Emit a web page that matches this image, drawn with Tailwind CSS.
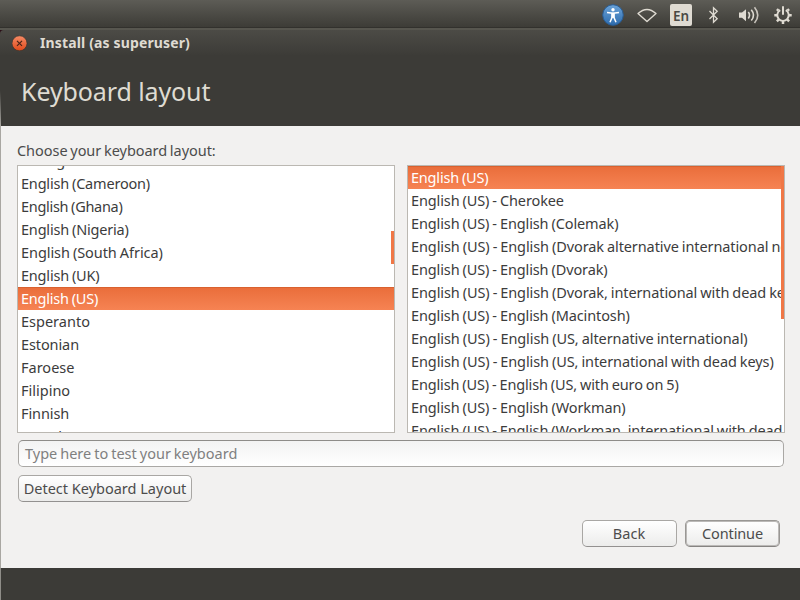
<!DOCTYPE html>
<html lang="en"><head><meta charset="utf-8"><title>Install</title>
<script src="https://cdn.jsdelivr.net/npm/@tailwindcss/browser@4"></script></head>
<body class="w-[800px] h-[600px] overflow-hidden bg-[#3c3b37] font-['Noto_Sans',sans-serif] text-[14.5px] text-[#3c3c3c] flex flex-col whitespace-nowrap">
<header class="h-[28px] shrink-0 bg-linear-to-b from-[#5d5c56] to-[#3d3c37] border-b border-[#32312d] flex items-center justify-end pr-[8px] pt-[3px] text-[#dfdbd2]">
  <svg class="w-[22px] h-[22px] mr-[13px]" viewBox="0 0 22 22"><defs><linearGradient id="a" x2="0" y2="1"><stop stop-color="#6ba3d8"/><stop offset="1" stop-color="#2d6cae"/></linearGradient></defs><circle cx="11" cy="11" r="10.3" fill="url(#a)" stroke="#2a5d94"/><circle cx="11" cy="5.700" r="1.700" fill="#fff"/><path d="M5 8.600 11 9.200 17 8.600M10.200 9.500v3.500L8 18.200M11.800 9.500v3.500l2.200 5.200" fill="none" stroke="#fff" stroke-width="1.500"/><path d="M9.300 8.800h3.400v5H9.300z" fill="#fff"/></svg>
  <svg class="w-[20px] h-[22px] mr-[13px]" viewBox="0 0 20 22" fill="none" stroke="currentColor" stroke-width="1.400"><path d="M1 9.600Q10 1.200 19 9.600L10 17.600Z" stroke-linejoin="round"/></svg>
  <span class="w-[22px] h-[22px] mr-[16px] bg-[#dfdbd2] rounded-[2px] text-[#4a4944] text-[13.5px] leading-[25px] font-semibold text-center">En</span>
  <svg class="w-[11px] h-[22px] mr-[20px]" viewBox="0 0 11 22" fill="none" stroke="currentColor" stroke-width="1.300"><path d="M1.500 7 9.200 14.800 5.500 18.300V3.700L9.200 7.200 1.500 15"/></svg>
  <svg class="w-[21px] h-[22px] mr-[14px]" viewBox="0 0 21 22" fill="none" stroke="currentColor" stroke-width="1.600"><path d="M0 8.500h3L7 5.200v12l-4-3.400H0Z" fill="currentColor" stroke="none"/><path d="M9.300 8q2.400 3.200 0 6.400"/><path d="M12.300 5.800q4.400 5.400 0 10.800"/><path d="M15.500 3.300q6.500 7.900 0 15.800" opacity=".85"/></svg>
  <svg class="w-[18px] h-[22px]" viewBox="0 0 18 22" fill="none" stroke="currentColor"><path d="M6.200 6.200A5.700 5.700 0 1 0 11.800 6.200" stroke-width="1.900"/><path d="M9 2.300v8.500" stroke-width="2"/><path d="M4.500 6.700 2.900 5.100M13.500 6.700l1.600-1.600M3 11.200H.3M15 11.200h2.700M4.800 15.400l-1.900 1.900M13.200 15.400l1.900 1.900M9 17v3" stroke-width="2.500"/></svg>
</header>
<div class="h-[2px] shrink-0 bg-[#57564f]"></div>
<main class="flex-1 flex flex-col">
  <div class="h-[26px] shrink-0 bg-[#2a0d16]"><div class="h-full bg-linear-to-b from-[#4c4b46] to-[#3c3b37] rounded-tl-[4px] flex items-center pl-[12px]">
    <svg class="w-[16px] h-[16px]" viewBox="0 0 16 16"><defs><linearGradient id="b" x2="0" y2="1"><stop stop-color="#f58b66"/><stop offset="1" stop-color="#e1491a"/></linearGradient></defs><circle cx="7.500" cy="8.300" r="7.500" fill="url(#b)" stroke="#33302b" stroke-width=".6"/><path d="m5 5.800 5 5m0-5-5 5" stroke="#4a2418" stroke-width="1.200"/></svg>
    <span class="ml-[12px] pb-[2px] font-bold text-[14px] tracking-[.14px] text-[#dfdbd2]">Install (as superuser)</span>
  </div></div>
  <div class="h-[70px] shrink-0 flex">
    <div class="w-px bg-linear-to-b from-[#3c3b37] from-50% to-[#a9a7a2]"></div>
    <h1 class="pl-[20px] pt-[17px] text-[25px] leading-[36px] tracking-[-.1px] text-[#dfdbd2]">Keyboard layout</h1>
  </div>
  <section class="h-[442px] shrink-0 bg-[#f2f1f0] border-l border-[#a9a7a2] px-[16px] pt-[14px] text-[#4c4c4c]">
    <p class="h-[25px] leading-[21px] [word-spacing:-1px] tracking-[-.04px]">Choose your keyboard layout:</p>
    <div class="flex gap-[12px] h-[268px] text-[#3c3c3c] [word-spacing:-.6px]">
      <div class="relative w-[378px] shrink-0 border border-[#bbb8b2] bg-white overflow-hidden leading-[23px] [&_li]:h-[23px] [&_li]:pl-[3px]">
        <ul class="-mt-[17px]"><li>Dzongkha<li class="tracking-[-.19px]">English (Cameroon)<li class="tracking-[-.3px]">English (Ghana)<li class="tracking-[-.19px]">English (Nigeria)<li class="tracking-[-.07px]">English (South Africa)<li class="tracking-[-.2px]">English (UK)<li class="tracking-[-.22px] text-white bg-linear-to-b from-[#ea6e3b] to-[#f68353] border-t border-[#d9612f] leading-[21px]">English (US)<li>Esperanto<li class="tracking-[-.1px]">Estonian<li>Faroese<li>Filipino<li class="tracking-[-.1px]">Finnish<li>French</ul>
        <div class="absolute right-0 top-[65px] w-[3px] h-[33px] bg-[#f07746]"></div>
      </div>
      <div class="relative w-[378px] shrink-0 border border-[#bbb8b2] bg-white overflow-hidden leading-[23px] tracking-[-.12px] [&_li]:h-[23px] [&_li]:pl-[3px]">
        <ul><li class="tracking-[-.2px] text-white bg-linear-to-b from-[#ea6e3b] to-[#f68353] border-t border-[#d9612f] leading-[21px]">English (US)<li>English (US) - Cherokee<li>English (US) - English (Colemak)<li class="tracking-[-.1px]">English (US) - English (Dvorak alternative international no dead keys)<li>English (US) - English (Dvorak)<li class="tracking-[-.1px]">English (US) - English (Dvorak, international with dead keys)<li>English (US) - English (Macintosh)<li class="tracking-[-.09px]">English (US) - English (US, alternative international)<li class="tracking-[-.1px]">English (US) - English (US, international with dead keys)<li class="tracking-[-.15px]">English (US) - English (US, with euro on 5)<li>English (US) - English (Workman)<li class="tracking-[-.13px]">English (US) - English (Workman, international with dead keys)</ul>
        <div class="absolute right-0 top-0 w-[3px] h-[153px] bg-[#f07746]"></div>
      </div>
    </div>
    <div class="mt-[7px] ml-[1px] w-[766px] h-[27px] rounded-[5px] border border-[#aaa8a5] border-t-[#8e8c89] bg-linear-to-b from-[#f3f3f3] to-white pl-[6px] leading-[25px] text-[#808080] [word-spacing:-.8px]">Type here to test your keyboard</div>
    <button class="block mt-[8px] ml-[1px] w-[174px] h-[27px] rounded-[5px] border border-[#a9a7a4] border-b-[#939190] bg-linear-to-b from-white to-[#ececeb] leading-[25px] text-center">Detect Keyboard Layout</button>
    <div class="flex justify-end gap-[8px] mt-[18px] pr-[4px]">
      <button class="w-[95px] h-[27px] rounded-[5px] border border-[#a9a7a4] border-b-[#939190] bg-linear-to-b from-white to-[#ececeb] leading-[25px] pr-[1px]">Back</button>
      <button class="w-[95px] h-[27px] rounded-[5px] border border-[#999794] border-b-[#868482] bg-linear-to-b from-white to-[#ececeb] leading-[25px] shadow-[inset_0_0_0_1px_#bbb9b7] tracking-[-.12px]">Continue</button>
    </div>
  </section>
  <div class="flex-1 border-l border-[#8f8d88]"></div>
</main>
</body></html>
